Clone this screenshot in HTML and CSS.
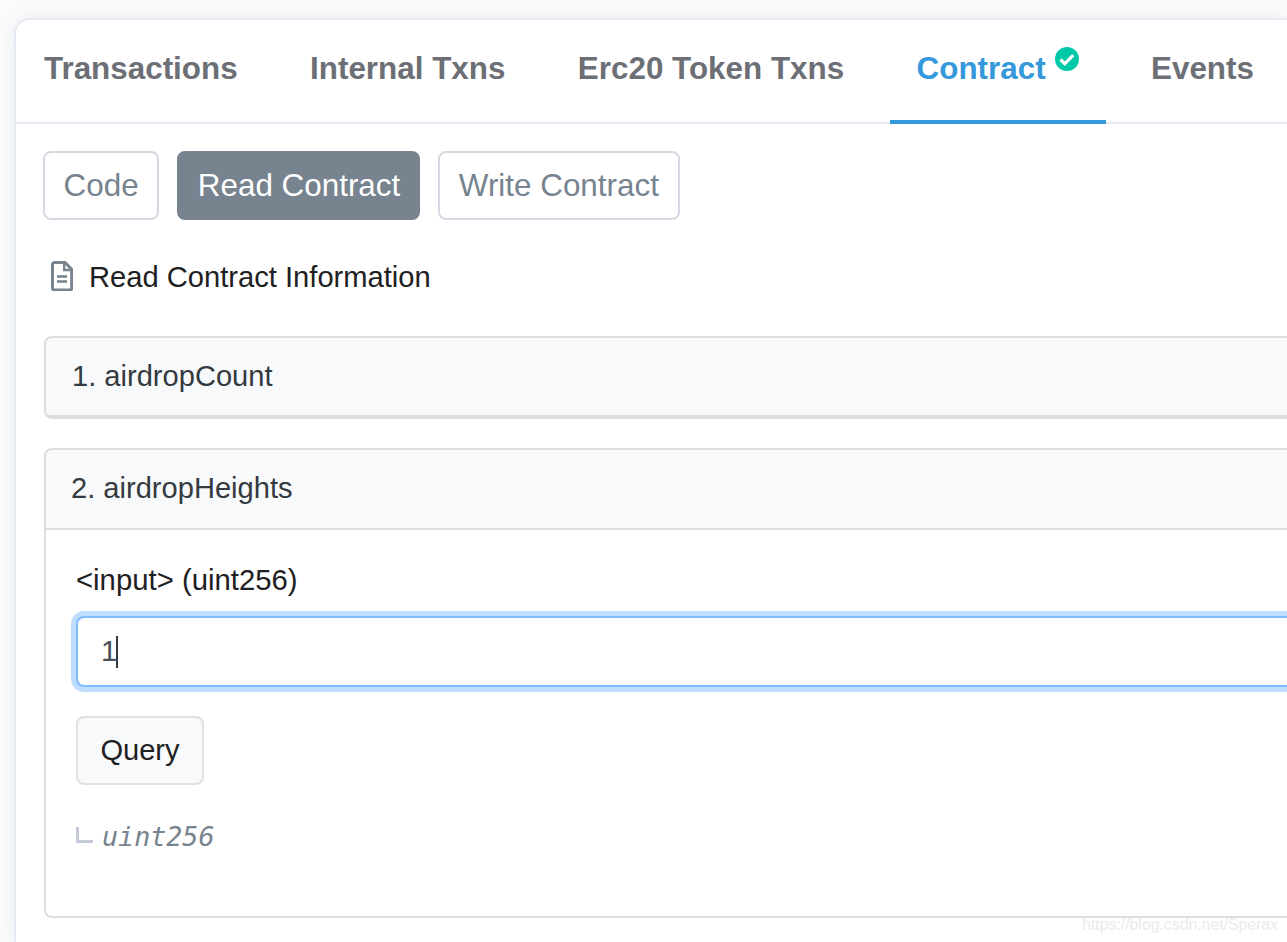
FILE: index.html
```html
<!DOCTYPE html>
<html lang="en">
<head>
    <meta charset="UTF-8">
    <title>Read Contract</title>
    <link rel="stylesheet" href="styles.css">
</head>
<body>
    <div class="card">
        <nav class="tabs">
            <a class="tab">Transactions</a>
            <a class="tab">Internal Txns</a>
            <a class="tab">Erc20 Token Txns</a>
            <a class="tab active">Contract<svg class="check" viewBox="0 0 24 24"><circle cx="12" cy="12" r="12" fill="#00c9a7"/><path d="M5.500 12.500l4.300 4.300 8.400-8.600" fill="none" stroke="#fff" stroke-width="3.200"/></svg></a>
            <a class="tab">Events</a>
        </nav>
        <div class="content">
            <div class="pills">
                <a class="pill">Code</a>
                <a class="pill selected">Read Contract</a>
                <a class="pill last">Write Contract</a>
            </div>
            <div class="info">
                <svg class="doc" viewBox="0 0 22 30"><path d="M3.500 1.500h10.500l6.700 6.700v18.800a2 2 0 0 1-2 2h-15.200a2 2 0 0 1-2-2v-23.500a2 2 0 0 1 2-2z" fill="none" stroke="#77838f" stroke-width="3"/><path d="M13.200 2v7h7" fill="none" stroke="#77838f" stroke-width="2.400"/><path d="M6 15.500h10M6 20.500h10" stroke="#77838f" stroke-width="2.600"/></svg>
                <span>Read Contract Information</span>
            </div>
            <section class="panel closed">
                <div class="panel-head first">1. airdropCount</div>
            </section>
            <section class="panel">
                <div class="panel-head">2. airdropHeights</div>
                <div class="panel-body">
                    <label class="field-label">&lt;input&gt; (uint256)</label>
                    <div class="input-box"><span>1</span><i class="caret"></i></div>
                    <button class="query">Query</button>
                    <div class="result"><i class="elbow"></i><em>uint256</em></div>
                </div>
            </section>
        </div>
    </div>
    <div class="watermark">https://blog.csdn.net/Sperax</div>
</body>
</html>
```

FILE: styles.css
```css
html, body {
    height: 100%;
}
body {
    margin: 0;
    overflow: hidden;
    background-color: #fafbfc;
    font-family: "Liberation Sans", Arial, sans-serif;
    color: #1e2022;
    position: relative;
}
/* the card and its panels run off the right and bottom of the shot */
.card {
    margin: 18px 0 0 14px;
    height: calc(100% - 18px);
    box-sizing: border-box;
    background-color: #fff;
    border: 2px solid #e7eaf3;
    border-right: none;
    border-bottom: none;
    border-radius: 16px 0 0 0;
    box-shadow: 0 0 20px rgba(189, 197, 209, 0.25);
}
.tabs {
    display: flex;
    height: 104px;
    box-sizing: border-box;
    border-bottom: 2px solid #e7eaf3;
    padding-left: 1px;
}
.tab {
    position: relative;
    display: block;
    flex-shrink: 0;
    box-sizing: border-box;
    height: 104px;
    padding: 30px 27px 0;
    margin-right: 18.4px;
    font-size: 31.4px;
    line-height: 37px;
    font-weight: bold;
    white-space: nowrap;
    color: #6c6f75;
}
.tab.active {
    color: #3498db;
    border-bottom: 4px solid #3498db;
    padding-right: 60px;
}
.check {
    position: absolute;
    top: 27px;
    right: 27px;
    width: 24px;
    height: 24px;
}
.content {
    padding: 27px 0 0 27px;
}
.pills {
    display: flex;
    gap: 18px;
}
.pill {
    display: block;
    box-sizing: border-box;
    height: 69px;
    padding: 0 18.6px;
    border: 2px solid #d5dae2;
    border-radius: 8px;
    font-size: 31.4px;
    line-height: 65px;
    color: #77838f;
}
.pill.selected {
    padding-right: 18px;
    background-color: #77838f;
    border-color: #77838f;
    color: #fff;
}
.pill.last {
    padding-right: 19px;
}
.info {
    display: flex;
    align-items: center;
    margin: 39px 0 40px 7px;
    height: 37px;
    font-size: 29.15px;
    color: #1e2022;
}
.doc {
    width: 22px;
    height: 30px;
    margin: 0 16px 3px 1px;
}
.panel {
    margin: 0 0 30px 1px;
    border: 2px solid #dedede;
    border-right: none;
    border-radius: 8px 0 0 8px;
    overflow: hidden;
}
.panel.closed {
    margin-bottom: 29px;
    border-bottom-width: 4px;
}
.panel-head {
    height: 80px;
    box-sizing: border-box;
    padding-left: 25px;
    background-color: #f8f9fa;
    border-bottom: 2px solid #dedede;
    font-size: 29.1px;
    line-height: 76px;
    color: #343a40;
}
.panel-head.first {
    height: 77px;
    border-bottom: none;
    padding-left: 26px;
}
.panel-body {
    box-sizing: border-box;
    height: 386px;
    padding: 32px 0 0 30px;
}
.field-label {
    display: block;
    font-size: 29.3px;
    line-height: 36px;
}
.input-box {
    display: flex;
    align-items: center;
    box-sizing: border-box;
    margin-top: 18px;
    height: 71px;
    padding-left: 23px;
    background-color: #fff;
    border: 2px solid #80bdff;
    border-right: none;
    border-radius: 8px 0 0 8px;
    box-shadow: 0 0 0 5px #bfdeff;
    font-size: 29.1px;
    color: #495057;
}
.caret {
    display: block;
    width: 2px;
    height: 32px;
    margin-left: -1px;
    background-color: #343a40;
}
.query {
    display: block;
    box-sizing: border-box;
    margin-top: 29px;
    width: 128px;
    height: 69px;
    background-color: #f8f9fa;
    border: 2px solid #dfe1e5;
    border-radius: 8px;
    font-family: inherit;
    font-size: 29.1px;
    color: #1e2022;
}
.result {
    display: flex;
    align-items: center;
    margin-top: 33px;
    height: 36px;
}
.elbow {
    display: block;
    width: 14px;
    height: 13px;
    margin: 0 9px 2px 0;
    border-left: 3px solid #c3c9d6;
    border-bottom: 3px solid #c3c9d6;
}
.result em {
    font-family: "DejaVu Sans Mono", monospace;
    font-size: 26.7px;
    color: #77838f;
}
.watermark {
    position: absolute;
    right: 9px;
    bottom: 5px;
    font-size: 15.8px;
    line-height: 24px;
    color: #ebebeb;
}
```
